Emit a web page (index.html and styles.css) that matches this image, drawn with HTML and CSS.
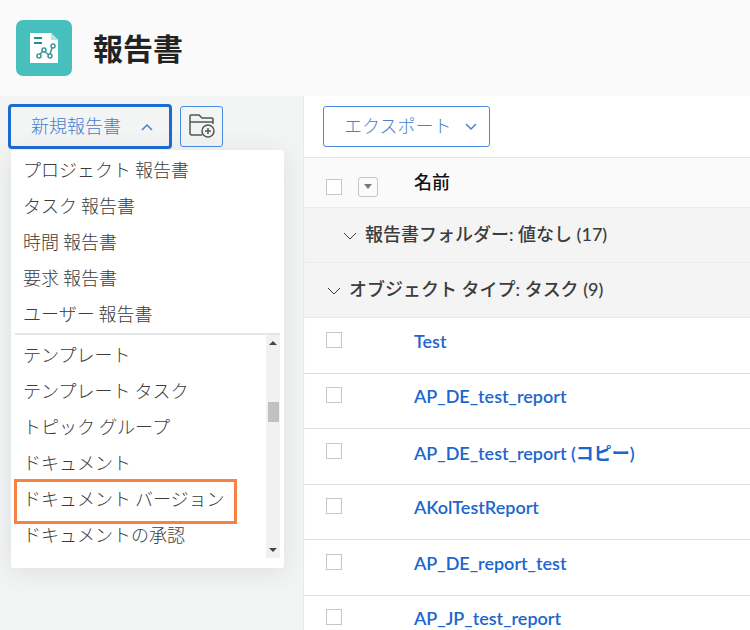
FILE: index.html
```html
<!DOCTYPE html>
<html lang="ja">
<head>
    <meta charset="UTF-8">
    <meta name="viewport" content="width=device-width, initial-scale=1">
    <title>報告書</title>
    <link rel="stylesheet" href="styles.css">
</head>
<body>
    <header class="header">
        <svg class="logo" viewBox="0 0 56 56" aria-hidden="true">
            <rect width="56" height="56" rx="7" fill="#47bfbd"/>
            <path d="M14 13h21l7 7v23H14z" fill="#fff"/>
            <path d="M35 13v7h7z" fill="#b5e5e4"/>
            <path d="M18 18h8M18 23h8" stroke="#268f8e" stroke-width="2"/>
            <g fill="none" stroke="#3a9897" stroke-width="1.5">
                <path d="M24 34l3-3M29 32l4 3M34 34l2-6"/>
                <circle cx="23" cy="36" r="2"/>
                <circle cx="28" cy="30" r="2"/>
                <circle cx="34" cy="36" r="2"/>
                <circle cx="37" cy="26" r="2"/>
            </g>
        </svg>
        <h1>報告書</h1>
    </header>
    <div class="layout">
        <aside class="sidebar">
            <div class="actions">
                <button class="btn btn-new" type="button" aria-expanded="true">
                    新規報告書
                    <svg class="chevron" viewBox="0 0 12 8"><path d="M1 7l5-5 5 5"/></svg>
                </button>
                <button class="btn btn-folder" type="button" aria-label="新規フォルダー">
                    <svg width="26" height="26" viewBox="0 0 26 26">
                        <path d="M13 23H3q-2 0-2-2V4q0-1 1-1h8l3 3h10q1 0 1 1v5M1 10h23"/>
                        <circle cx="19" cy="19" r="6"/>
                        <path d="M19 16v6M16 19h6"/>
                    </svg>
                </button>
            </div>
            <div class="menu">
                <ul>
                    <li><a href="#">プロジェクト 報告書</a></li>
                    <li><a href="#">タスク 報告書</a></li>
                    <li><a href="#">時間 報告書</a></li>
                    <li><a href="#">要求 報告書</a></li>
                    <li><a href="#">ユーザー 報告書</a></li>
                </ul>
                <div class="more">
                    <ul>
                        <li><a href="#">テンプレート</a></li>
                        <li><a href="#">テンプレート タスク</a></li>
                        <li><a href="#">トピック グループ</a></li>
                        <li><a href="#">ドキュメント</a></li>
                        <li class="marked"><a href="#">ドキュメント バージョン</a></li>
                        <li><a href="#">ドキュメントの承認</a></li>
                    </ul>
                    <div class="scrollbar">
                        <span class="arrow arrow-up"></span>
                        <span class="thumb"></span>
                        <span class="arrow arrow-down"></span>
                    </div>
                </div>
            </div>
        </aside>
        <main class="content">
            <div class="toolbar">
                <button class="btn btn-export" type="button">
                    エクスポート
                    <svg class="chevron" viewBox="0 0 12 8"><path d="M1 1l5 5 5-5"/></svg>
                </button>
            </div>
            <table>
                <thead>
                    <tr>
                        <th class="check">
                            <div class="tools">
                                <input type="checkbox" aria-label="すべて選択">
                                <button class="select-menu" type="button" aria-label="選択オプション"></button>
                            </div>
                        </th>
                        <th class="name">名前</th>
                    </tr>
                </thead>
                <tbody>
                    <tr class="group group-top">
                        <th colspan="2"><svg class="chevron" viewBox="0 0 12 8"><path d="M0 1l6 6 6-6"/></svg>報告書フォルダー: 値なし (17)</th>
                    </tr>
                    <tr class="group">
                        <th colspan="2"><svg class="chevron" viewBox="0 0 12 8"><path d="M0 1l6 6 6-6"/></svg>オブジェクト タイプ: タスク (9)</th>
                    </tr>
                </tbody>
                <tbody class="reports">
                    <tr>
                        <td class="check"><input type="checkbox" aria-label="Test"></td>
                        <td class="name"><a href="#">Test</a></td>
                    </tr>
                    <tr>
                        <td class="check"><input type="checkbox" aria-label="AP_DE_test_report"></td>
                        <td class="name"><a href="#">AP_DE_test_report</a></td>
                    </tr>
                    <tr>
                        <td class="check"><input type="checkbox" aria-label="AP_DE_test_report (コピー)"></td>
                        <td class="name"><a href="#">AP_DE_test_report (コピー)</a></td>
                    </tr>
                    <tr>
                        <td class="check"><input type="checkbox" aria-label="AKolTestReport"></td>
                        <td class="name"><a href="#">AKolTestReport</a></td>
                    </tr>
                    <tr>
                        <td class="check"><input type="checkbox" aria-label="AP_DE_report_test"></td>
                        <td class="name"><a href="#">AP_DE_report_test</a></td>
                    </tr>
                    <tr>
                        <td class="check"><input type="checkbox" aria-label="AP_JP_test_report"></td>
                        <td class="name"><a href="#">AP_JP_test_report</a></td>
                    </tr>
                </tbody>
            </table>
        </main>
    </div>
</body>
</html>
```
FILE: styles.css
```css
*, *:before, *:after {
    margin: 0;
    padding: 0;
    box-sizing: border-box;
}
body {
    display: flex;
    flex-direction: column;
    height: 100vh;
    overflow: hidden;
    font-family: Lato, "Noto Sans CJK JP", sans-serif;
    font-size: 18px;
    color: #3c3c3c;
    background: #fafafa;
}
a {
    text-decoration: none;
}
ul {
    list-style: none;
}
.header {
    display: flex;
    align-items: center;
    flex-shrink: 0;
    height: 96px;
    padding: 0 16px;
    gap: 21px;
}
.logo {
    width: 56px;
    height: 56px;
}
h1 {
    font-size: 30px;
    line-height: 40px;
    color: #222;
}
.layout {
    display: flex;
    flex: 1;
    min-height: 0;
}
.sidebar {
    position: relative;
    flex: 0 0 304px;
    padding: 8px;
    background: #f3f4f4;
    border-right: 1px solid #e8eaeb;
}
.actions {
    display: flex;
    align-items: center;
    gap: 8px;
}
.btn {
    display: flex;
    align-items: center;
    justify-content: space-between;
    height: 41px;
    padding-bottom: 3px;
    border: 1px solid #4a8ae0;
    border-radius: 3px;
    background: none;
    color: #4a80cc;
    font-family: "Noto Sans CJK JP", sans-serif;
    font-size: 18px;
    font-weight: 300;
}
.btn-new {
    width: 164px;
    height: 45px;
    padding: 0 16px 3px 20px;
    border: 3px solid #1a6cd0;
    border-radius: 4px;
}
.btn-folder {
    width: 43px;
    justify-content: center;
}
.btn-folder svg {
    fill: none;
    stroke: #555;
    stroke-width: 1.5;
}
.btn-export {
    width: 167px;
    padding: 0 12px 3px 20px;
    background: #fff;
}
.btn .chevron {
    margin-top: 3px;
}
.chevron {
    width: 12px;
    height: 8px;
    fill: none;
    stroke: currentColor;
    stroke-width: 1.5;
}
.menu {
    position: absolute;
    top: 54px;
    left: 11px;
    width: 273px;
    padding: 1px 4px 10px;
    background: #fff;
    border-radius: 3px;
    box-shadow: 0 4px 24px rgba(80, 100, 120, .14);
}
.menu li {
    position: relative;
    height: 36px;
    padding-left: 8px;
    line-height: 36px;
}
.menu a {
    color: #3c3c3c;
    font-family: "Noto Sans CJK JP", sans-serif;
    font-weight: 300;
}
.more {
    display: flex;
    justify-content: space-between;
    height: 225px;
    margin-top: 2px;
    border-top: 2px solid #e6e6e6;
}
.more ul {
    padding-top: 1px;
}
.marked:after {
    content: "";
    position: absolute;
    top: -1px;
    left: -1px;
    width: 223px;
    height: 45px;
    border: 3px solid #f58345;
}
.scrollbar {
    display: flex;
    flex-direction: column;
    align-items: center;
    justify-content: space-between;
    width: 14px;
    padding: 6px 0;
    background: #f1f1f1;
}
.arrow {
    border: 4px solid transparent;
}
.arrow-up {
    border-top: 0;
    border-bottom-color: #444;
}
.arrow-down {
    border-bottom: 0;
    border-top-color: #444;
}
.thumb {
    width: 11px;
    height: 20px;
    margin-bottom: 70px;
    background: #c1c1c1;
}
.content {
    flex: 1;
    min-width: 0;
    background: #fff;
}
.toolbar {
    padding: 10px 19px;
}
table {
    width: 100%;
    border-collapse: separate;
    border-spacing: 0;
}
th {
    text-align: left;
    font-weight: 500;
}
thead th {
    height: 51px;
    background: #fafafa;
    border-top: 1px solid #e4e7e8;
    border-bottom: 1px solid #e9ebec;
    color: #111;
}
thead .name {
    padding-bottom: 4px;
}
.check {
    width: 110px;
    padding-left: 22px;
}
.tools {
    display: flex;
    align-items: center;
    gap: 16px;
    padding-top: 8px;
}
input {
    display: block;
    appearance: none;
    width: 16px;
    height: 16px;
    border: 1px solid #c6c6c6;
    background: #fff;
}
.select-menu {
    display: flex;
    align-items: center;
    justify-content: center;
    width: 20px;
    height: 20px;
    border: 1px solid #c6c6c6;
    border-radius: 3px;
    background: #fafafa;
}
.select-menu:after {
    content: "";
    border: 4px solid transparent;
    border-top: 5px solid #777;
    border-bottom: 0;
}
.group th {
    height: 55px;
    padding: 0 0 4px 24px;
    background: #f4f4f4;
    border-bottom: 1px solid #e9ebec;
}
.group-top th {
    padding-left: 40px;
}
.group .chevron {
    margin-right: 9px;
    vertical-align: middle;
    stroke-width: 1;
}
.reports td {
    height: 56px;
    border-bottom: 1px solid #dcdfe1;
}
.reports tr:nth-child(even) td {
    height: 55px;
}
.reports .name {
    padding-bottom: 10px;
}
.reports input {
    margin-bottom: 12px;
}
.reports a {
    color: #1b66cf;
    font-weight: 600;
}
```
